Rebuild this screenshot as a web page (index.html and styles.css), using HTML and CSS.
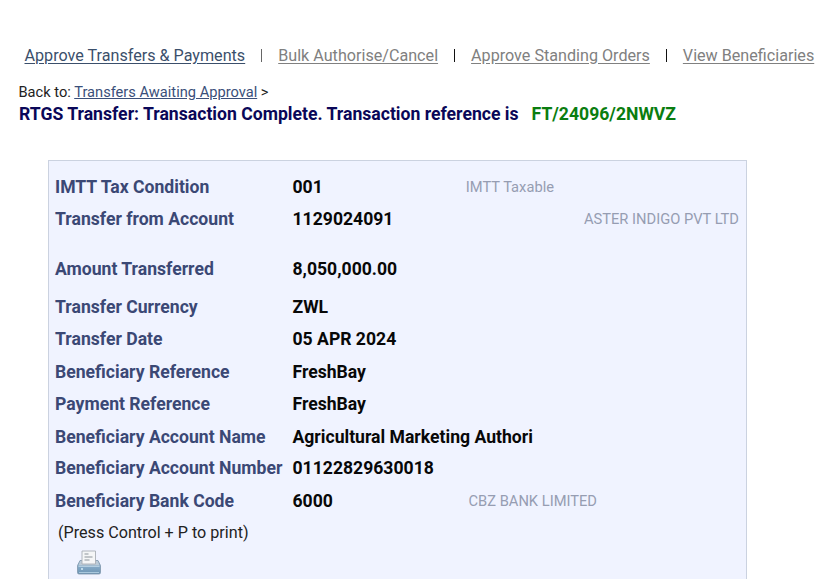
FILE: index.html
```
<!DOCTYPE html>
<html lang="en">

<head>
    <meta charset="UTF-8">
    <title>RTGS Transfer</title>
    <link rel="stylesheet" href="styles.css">
</head>

<body>
    <nav class="menu">
        <a class="active" href="#">Approve Transfers &amp; Payments</a>
        <span class="sep first"></span>
        <a href="#">Bulk Authorise/Cancel</a>
        <span class="sep"></span>
        <a href="#">Approve Standing Orders</a>
        <span class="sep"></span>
        <a href="#">View Beneficiaries</a>
    </nav>
    <div class="back">Back to: <a href="#">Transfers Awaiting Approval</a> &gt;</div>
    <h1 class="title"><span>RTGS Transfer: Transaction Complete. Transaction reference is</span><span class="ref">FT/24096/2NWVZ</span></h1>

    <div class="panel">
        <div class="row">
            <div class="label">IMTT Tax Condition</div>
            <div class="value">001</div>
            <div class="note tax">IMTT Taxable</div>
        </div>
        <div class="row">
            <div class="label">Transfer from Account</div>
            <div class="value">1129024091</div>
            <div class="note">ASTER INDIGO PVT LTD</div>
        </div>
        <div class="row amount">
            <div class="label">Amount Transferred</div>
            <div class="value">8,050,000.00</div>
        </div>
        <div class="row currency">
            <div class="label">Transfer Currency</div>
            <div class="value">ZWL</div>
        </div>
        <div class="row">
            <div class="label">Transfer Date</div>
            <div class="value">05 APR 2024</div>
        </div>
        <div class="row next">
            <div class="label">Beneficiary Reference</div>
            <div class="value">FreshBay</div>
        </div>
        <div class="row">
            <div class="label">Payment Reference</div>
            <div class="value">FreshBay</div>
        </div>
        <div class="row next">
            <div class="label">Beneficiary Account Name</div>
            <div class="value">Agricultural Marketing Authori</div>
        </div>
        <div class="row number">
            <div class="label">Beneficiary Account Number</div>
            <div class="value">01122829630018</div>
        </div>
        <div class="row next">
            <div class="label">Beneficiary Bank Code</div>
            <div class="value">6000</div>
            <div class="note bank">CBZ BANK LIMITED</div>
        </div>
        <div class="hint">(Press Control + P to print)</div>
        <svg class="printer" width="26" height="26" viewBox="0 0 26 26">
            <defs>
                <linearGradient id="body" x1="0" y1="0" x2="0" y2="1">
                    <stop offset="0" stop-color="#b7cddd" />
                    <stop offset="0.4" stop-color="#86abc8" />
                    <stop offset="1" stop-color="#6c94b4" />
                </linearGradient>
            </defs>
            <path d="M4 10.500h18l2.500 5v7q0 1.500-1.500 1.500H3q-1.500 0-1.500-1.500v-7z" fill="url(#body)" stroke="#7d96ab" stroke-width="0.8" />
            <path d="M4.500 11h17l2 4.500H2.500z" fill="#bccbd8" />
            <path d="M6 1h13.500v13H6z" fill="#f5f6f7" stroke="#a9afb5" stroke-width="0.9" />
            <path d="M8.500 4h4M8.500 7h8M8.500 10h5" stroke="#8d949b" stroke-width="1.200" />
            <path d="M2.500 16.500h21" stroke="#b9d2e4" stroke-width="0.9" />
            <path d="M3 22.500h20" stroke="#a9c8dd" stroke-width="1" />
            <circle cx="6" cy="19" r="1" fill="#d5edf7" />
        </svg>
    </div>
</body>

</html>
```
FILE: styles.css
```
body {
    margin: 0;
    height: 579px;
    overflow: hidden;
    display: flex;
    flex-direction: column;
    background: #fff;
    color: #222;
    font-family: Roboto, "Liberation Sans", sans-serif;
    white-space: nowrap;
}

.menu {
    display: flex;
    align-items: center;
    height: 20px;
    margin: 46px 0 0 24.5px;
    font-size: 16.15px;
}

.menu a {
    color: #808080;
    text-underline-offset: 2px;
}

.menu .active {
    color: #3b4f6b;
}

.sep {
    width: 1px;
    height: 13px;
    margin: 0 16px;
    background: #111;
}

.sep.first {
    background: #666;
}

.back {
    height: 20px;
    margin: 17px 0 0 18.5px;
    font-size: 14.65px;
    line-height: 20px;
}

.back a {
    color: #3a4f7a;
}

.title {
    display: flex;
    height: 22px;
    margin: 1px 0 0 19px;
    font-size: 17.63px;
    line-height: 22px;
    color: #0a0758;
}

.ref {
    margin-left: 13px;
    color: #0a7d0f;
}

.panel {
    box-sizing: border-box;
    width: 699px;
    height: 440px;
    flex-shrink: 0;
    margin: 35px 0 0 48px;
    padding: 10px 7px 0 6px;
    border: 1px solid #cbd2e0;
    background: #f0f3ff;
}

.row {
    display: flex;
    height: 32px;
    line-height: 32px;
    font-size: 17.6px;
    font-weight: bold;
}

.row.amount {
    margin-top: 18px;
}

.row.currency {
    margin-top: 6px;
}

.row.next {
    margin-top: 1px;
}

.row.number {
    margin-top: -1px;
}

.label {
    width: 237.5px;
    color: #3b4875;
}

.value {
    color: #080808;
}

.note {
    margin-left: auto;
    font-size: 14.7px;
    line-height: 33px;
    font-weight: normal;
    color: #969db2;
}

.note.tax {
    margin-right: 185px;
}

.note.bank {
    margin-right: 142px;
}

.hint {
    height: 32px;
    padding-left: 3px;
    line-height: 32px;
    font-size: 16.15px;
}

.printer {
    display: block;
    margin: 1px 0 0 21px;
}
```
